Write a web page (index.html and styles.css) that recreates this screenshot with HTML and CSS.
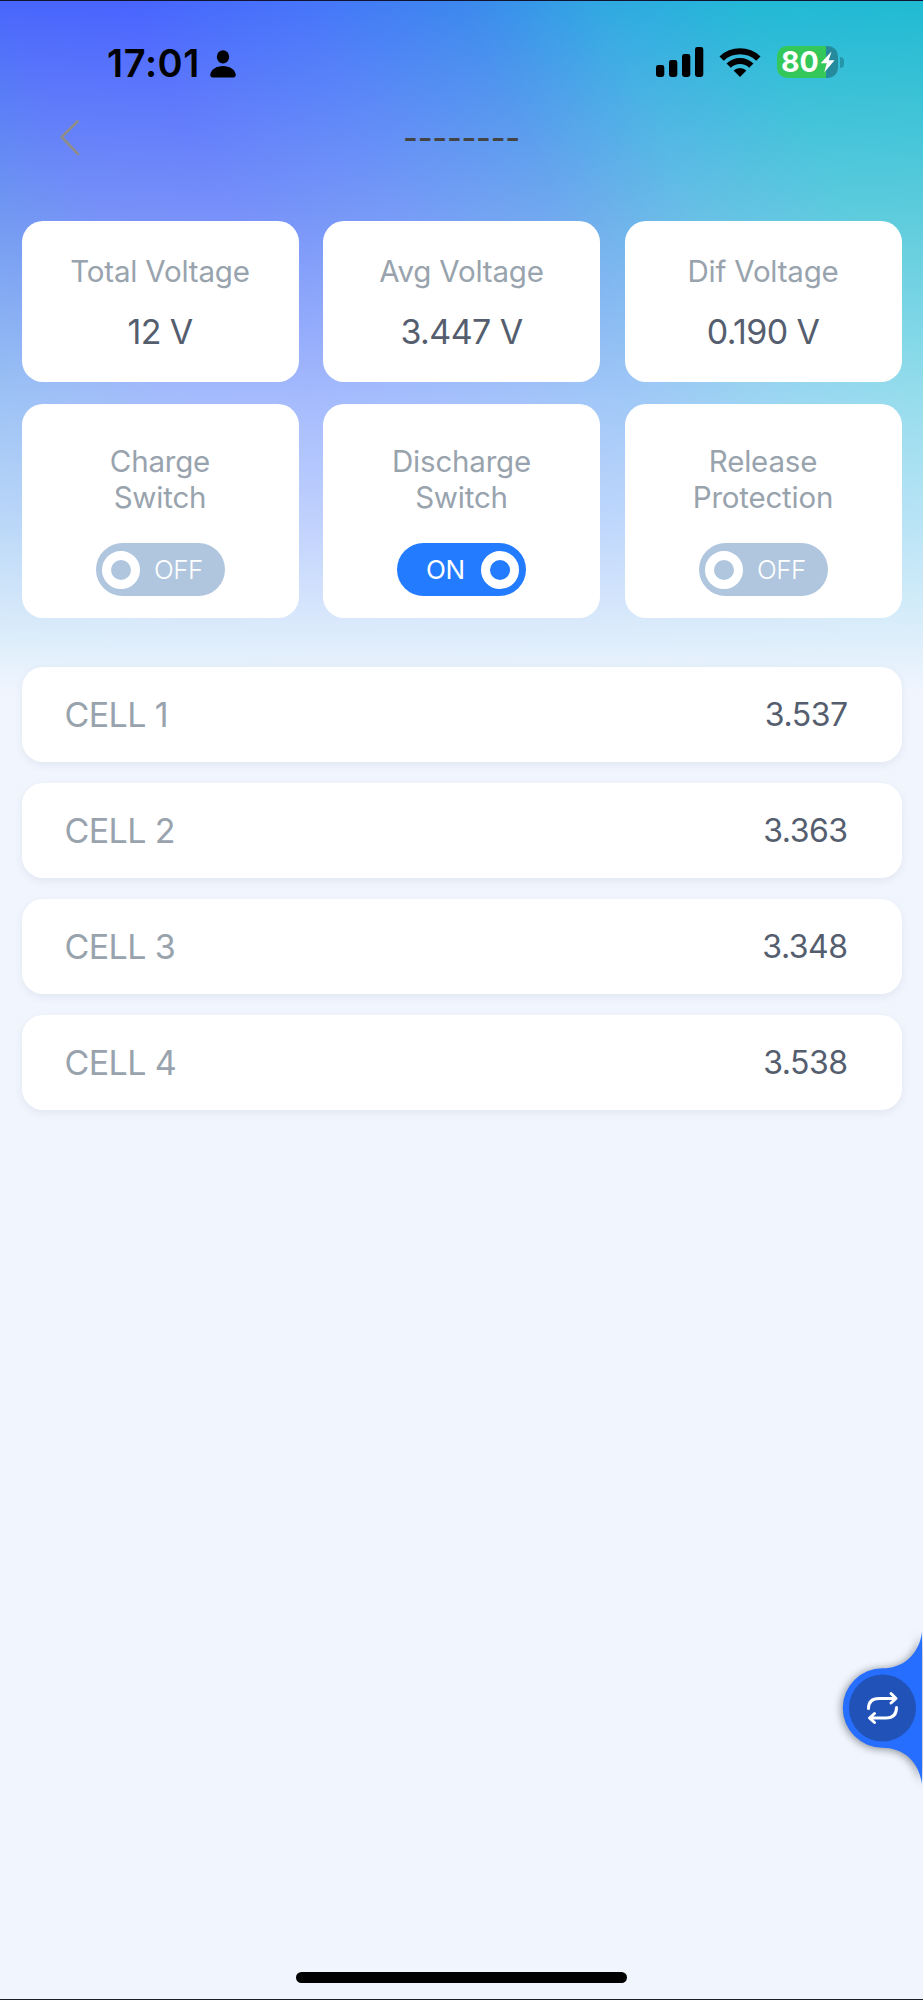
FILE: index.html
```html
<!DOCTYPE html>
<html lang="en">
<head>
<meta charset="utf-8">
<title>Battery cells</title>
<link rel="stylesheet" href="styles.css">
</head>
<body>
<div class="screen">
  <header class="status">
    <div class="status-left">
      <span class="time">17:01</span>
      <svg class="person" width="26" height="28" viewBox="0 0 26 28"><ellipse cx="13" cy="6.8" rx="6.2" ry="6.6"/><path d="M3 27.5Q0 27.5 .3 24.500C1 19.500 6.500 16 13 16S25 19.500 25.700 24.500Q26 27.500 23 27.500Z"/></svg>
    </div>
    <div class="status-right">
      <svg class="signal" width="48" height="31" viewBox="0 0 48 31"><rect x="0" y="18" width="8.300" height="12" rx="2.400"/><rect x="13" y="13" width="8.300" height="17" rx="2.400"/><rect x="26" y="7" width="8.300" height="23" rx="2.400"/><rect x="39" y="0" width="8.300" height="30" rx="2.400"/></svg>
      <svg class="wifi" width="42" height="31" viewBox="0 0 42 31"><path d="M0.500 9.500A29.500 29.500 0 0 1 41.500 9.500L37.200 13.700A23.300 23.300 0 0 0 4.800 13.700Z"/><path d="M7.500 16.500A19.500 19.500 0 0 1 34.500 16.500L30.200 20.800A13.300 13.300 0 0 0 11.800 20.800Z"/><path d="M14.600 23.600A9.400 9.400 0 0 1 27.400 23.600L21 30Z"/></svg>
      <div class="battery">
        <div class="battery-body"><span class="battery-level">80</span><svg width="15" height="22" viewBox="0 0 15 22"><path d="M11.500 0.500L0.700 12.300H6.700L4.200 21.500L14.600 9.300H8.700Z" fill="#fff"/></svg></div>
        <div class="battery-tip"></div>
      </div>
    </div>
  </header>
  <nav class="nav">
    <svg class="back" width="20" height="36" viewBox="0 0 20 36"><path d="M17.500 1.500L1.700 17L18 34" fill="none" stroke="#8f8d8a" stroke-width="2.600" stroke-linecap="round" stroke-linejoin="round"/></svg>
    <h1 class="title">--------</h1>
  </nav>
  <section class="grid stats">
    <div class="card"><div class="label">Total Voltage</div><div class="value">12 V</div></div>
    <div class="card"><div class="label">Avg Voltage</div><div class="value">3.447 V</div></div>
    <div class="card"><div class="label">Dif Voltage</div><div class="value">0.190 V</div></div>
  </section>
  <section class="grid switches">
    <div class="card"><div class="label">Charge<br>Switch</div><div class="toggle"><i class="knob"></i><span>OFF</span></div></div>
    <div class="card"><div class="label">Discharge<br>Switch</div><div class="toggle on"><span>ON</span><i class="knob"></i></div></div>
    <div class="card"><div class="label">Release<br>Protection</div><div class="toggle"><i class="knob"></i><span>OFF</span></div></div>
  </section>
  <section class="cells">
    <div class="cell"><span class="name">CELL 1</span><span class="reading">3.537</span></div>
    <div class="cell"><span class="name">CELL 2</span><span class="reading">3.363</span></div>
    <div class="cell"><span class="name">CELL 3</span><span class="reading">3.348</span></div>
    <div class="cell"><span class="name">CELL 4</span><span class="reading">3.538</span></div>
  </section>
  <svg class="fab" width="100" height="190" viewBox="0 0 100 190">
    <path class="fab-body" d="M99 17C96 40 80 53.300 59.500 53.300A39.700 39.700 0 0 0 19.800 93A39.700 39.700 0 0 0 59.500 132.700C80 132.700 96 146 99 169Z" fill="#256eff"/>
    <circle cx="59.500" cy="93" r="33.500" fill="#2052b8"/>
    <g fill="none" stroke="#fff" stroke-width="3" stroke-linecap="round" stroke-linejoin="round"><path d="M45.500 93.500C45.500 87 49 83.500 56 83.500H72.500M68 78.500L73 83.500L68 88"/><path d="M73.500 92.500C73.500 99 70 103 63 103H47M51.500 98.500L46.500 103L51.500 107.500"/></g>
  </svg>
  <div class="home-bar"></div>
</div>
</body>
</html>
```
FILE: styles.css
```css
* { box-sizing: border-box; }
body { margin: 0; }
.screen {
  position: relative;
  display: flex;
  flex-direction: column;
  width: 923px;
  height: 2000px;
  overflow: hidden;
  border-top: 1px solid #101430;
  border-bottom: 1px solid #1c1f26;
  font-family: Inter, "Liberation Sans", sans-serif;
  background:
    linear-gradient(180deg, rgba(235,250,238,0) 0, rgba(235,250,238,.29) 210px, rgba(231,248,252,.59) 400px, rgba(232,245,254,.75) 520px, rgba(227,241,251,.97) 640px, #f0f5ff 690px) 0 0 / 100% 690px no-repeat,
    linear-gradient(65deg, #2c84e0 0, #3478ea 10%, #4866fc 26%, #4864fe 36%, #4674fa 50%, #3c88ee 63%, #30a8e2 74%, #22b8d6 86%, #20bad2 100%) 0 0 / 100% 690px no-repeat,
    #f0f5fe;
}
.status {
  display: flex;
  justify-content: space-between;
  height: 96px;
  padding: 44px 79px 0 107px;
}
.status-left, .status-right { display: flex; align-items: flex-start; }
.time { font-size: 38px; line-height: 36px; font-weight: 600; letter-spacing: 0.6px; }
.person { margin: 5px 0 0 10px; }
.signal { margin-top: 2px; }
.wifi { margin: 2px 0 0 15px; }
.battery { display: flex; align-items: center; margin: 1px 0 0 16px; }
.battery-body {
  display: flex;
  align-items: center;
  width: 61px;
  height: 32px;
  padding-left: 4px;
  border-radius: 10px;
  background: linear-gradient(90deg, #34c759 80%, #258a9c 80%);
}
.battery-level { width: 39px; color: #fff; font-size: 28.5px; line-height: 32px; font-weight: 700; letter-spacing: 0; }
.battery-tip { width: 4px; height: 11px; margin-left: 2px; border-radius: 0 4px 4px 0; background: #2596aa; }
.nav {
  display: grid;
  grid-template-columns: 160px 1fr 160px;
  align-items: start;
  height: 124px;
  padding-top: 23px;
}
.back { margin-left: 60px; }
.title { margin: -2px 0 0; text-align: center; color: #444; font-size: 32px; line-height: 40px; font-weight: 500; letter-spacing: -.2px; }
.grid {
  display: grid;
  grid-template-columns: repeat(3, 277px);
  justify-content: space-between;
  padding: 0 21.5px;
}
.card {
  display: flex;
  flex-direction: column;
  align-items: center;
  border-radius: 21px;
  background: #fff;
}
.stats .card { height: 161px; padding-top: 32px; }
.label { color: #98a3ad; font-size: 29.5px; line-height: 36px; font-weight: 400; letter-spacing: -.2px; text-align: center; }
.value { margin-top: 23px; color: #555e6e; font-size: 34px; line-height: 40px; font-weight: 400; letter-spacing: -.6px; }
.switches { margin-top: 21.500px; }
.switches .card { height: 214.500px; padding-top: 39px; }
.toggle {
  display: flex;
  align-items: center;
  justify-content: space-between;
  width: 129px;
  height: 53px;
  margin-top: 28.500px;
  padding: 0 21.500px 0 6px;
  border-radius: 27px;
  background: #b0c6de;
  color: #fff;
  font-size: 26px;
  font-weight: 300;
  letter-spacing: -.4px;
}
.toggle.on { padding: 0 7px 0 29px; background: #237bff; font-weight: 400; }
.knob { width: 38px; height: 38px; border: 9px solid #fff; border-radius: 50%; }
.cells { display: grid; gap: 21px; padding: 49px 21.500px 0; }
.cell {
  display: flex;
  align-items: center;
  justify-content: space-between;
  height: 95px;
  padding: 0 54px 0 43px;
  border-radius: 21px;
  background: #fff;
  box-shadow: 0 3px 8px rgba(60,70,80,.08);
}
.name { color: #98a3ad; font-size: 34px; font-weight: 400; letter-spacing: -.6px; }
.reading { color: #555e6e; font-size: 32px; font-weight: 400; letter-spacing: -.5px; }
.fab { position: absolute; right: 0; top: 1614px; }
.fab-body { filter: drop-shadow(-1px 1px 4px rgba(0,0,0,.45)); }
.home-bar {
  width: 331px;
  height: 11px;
  margin: auto auto 16px 296px;
  border-radius: 6px;
  background: #000;
}
```
